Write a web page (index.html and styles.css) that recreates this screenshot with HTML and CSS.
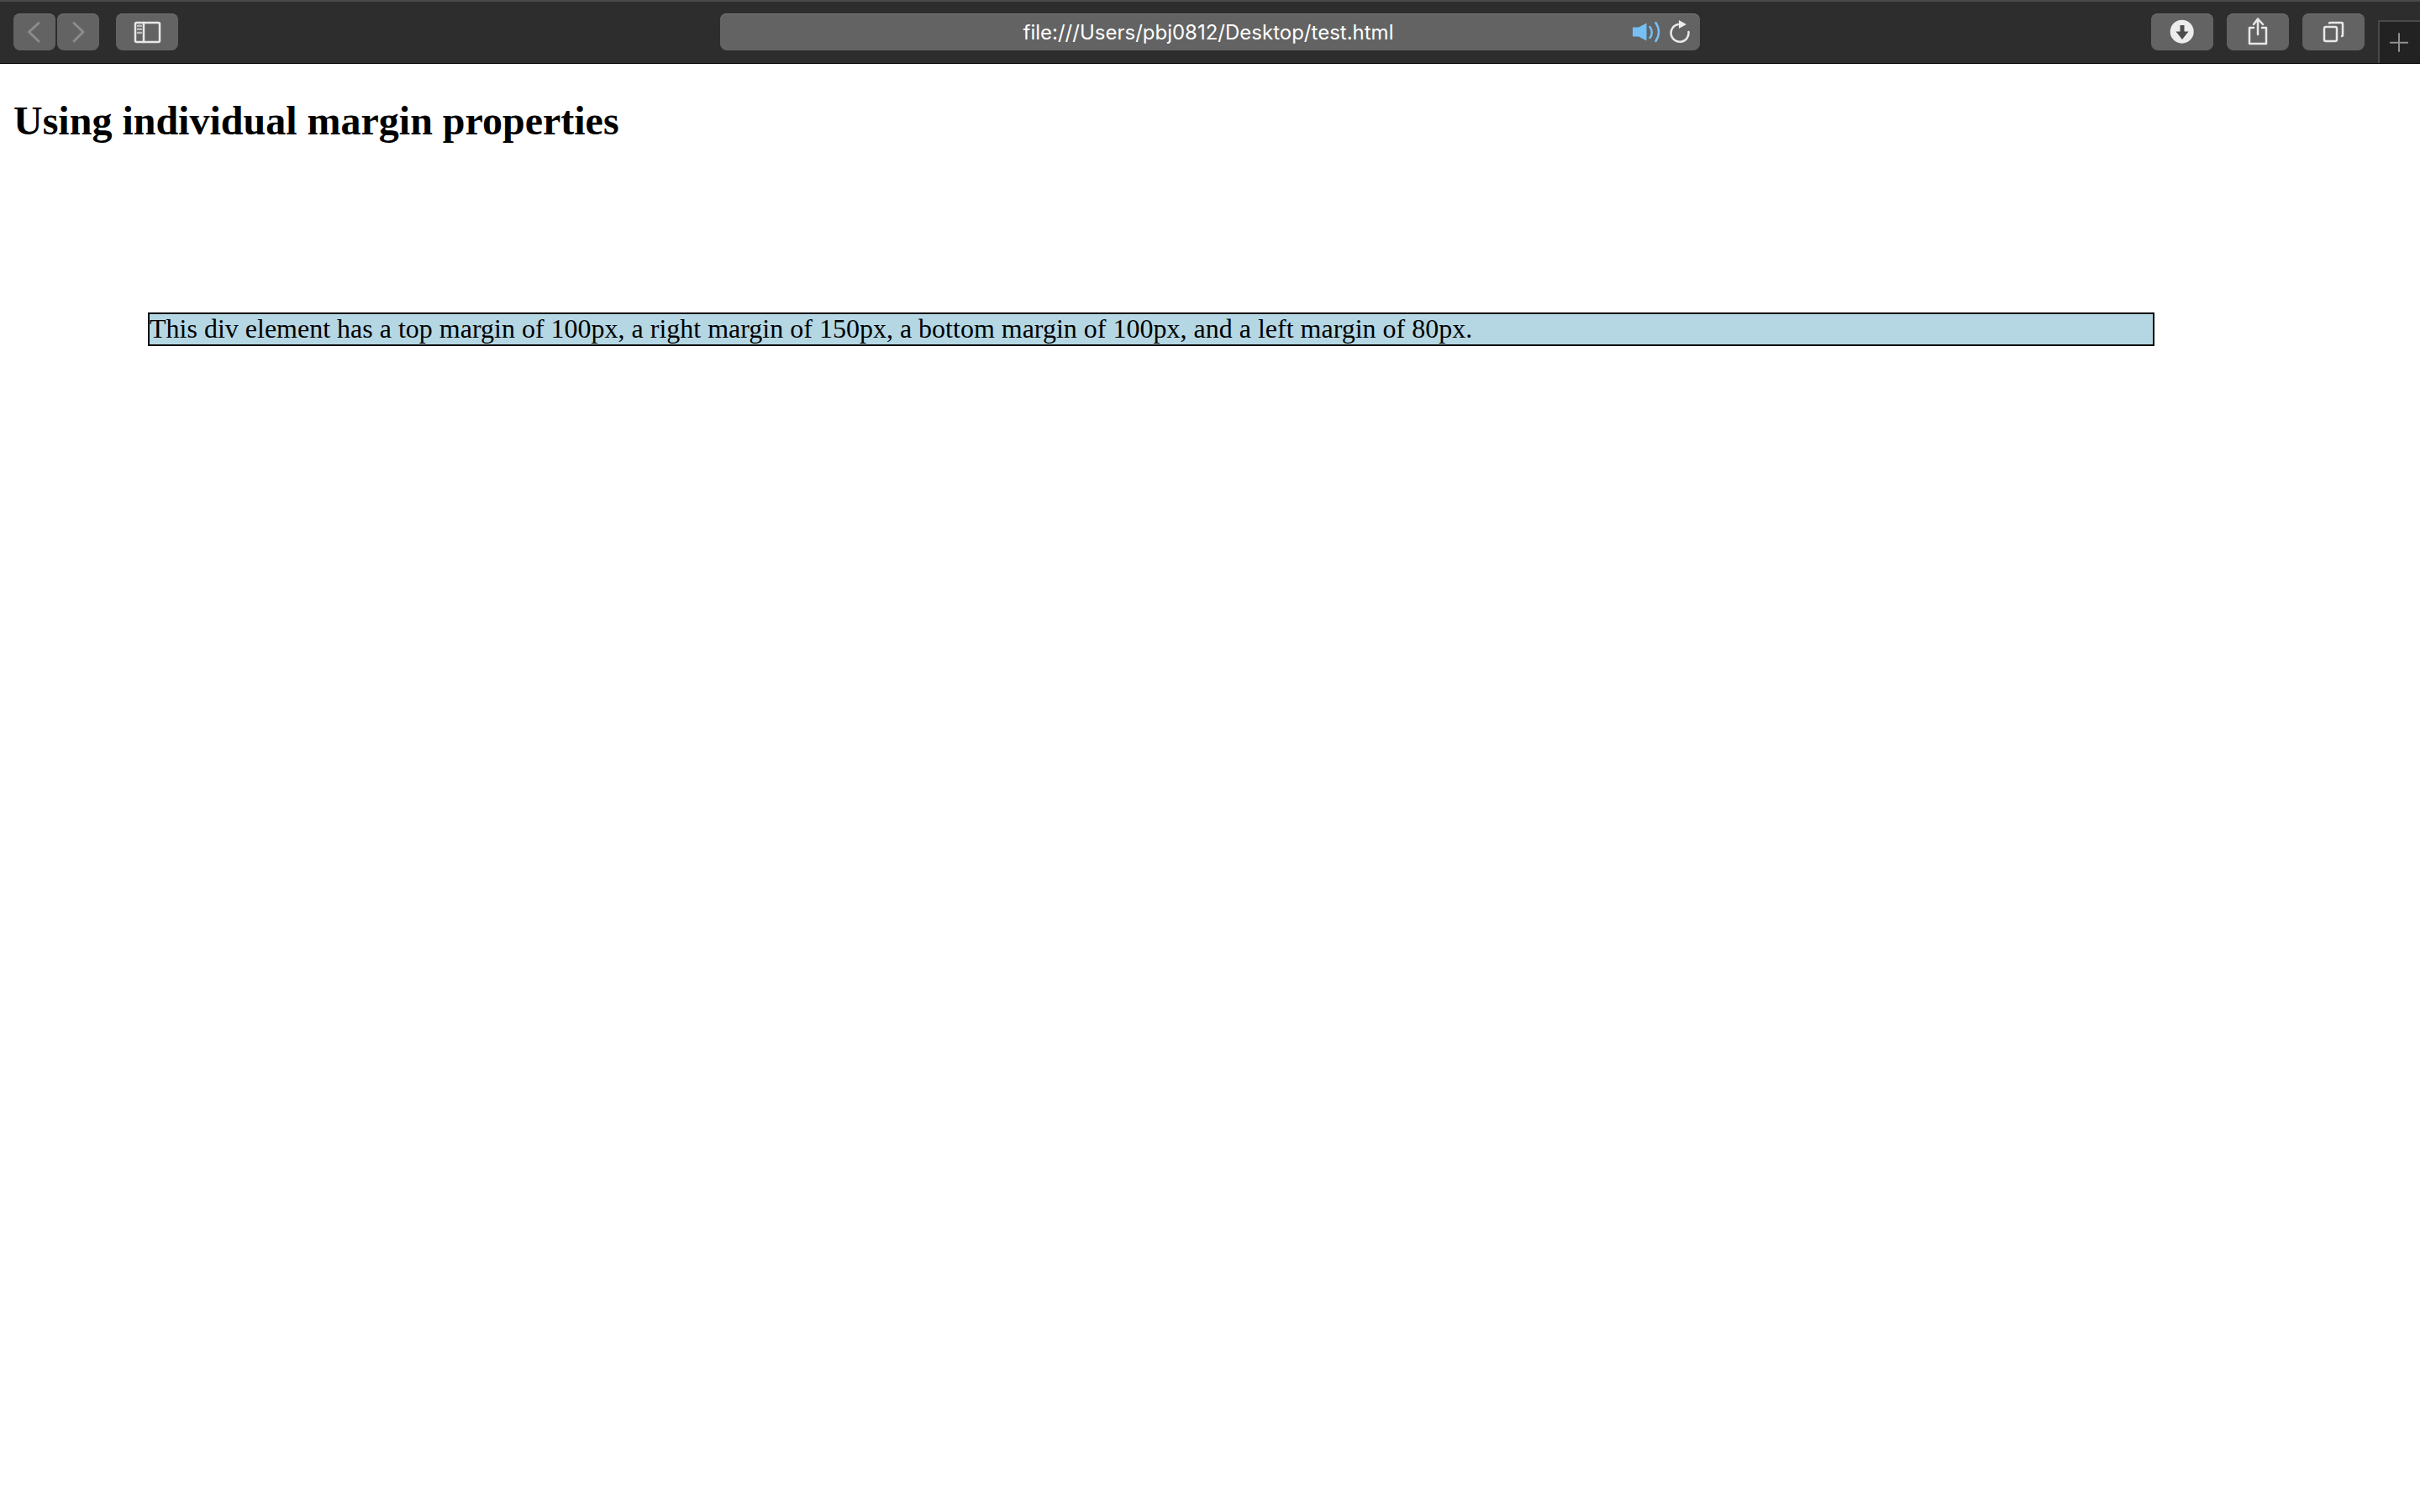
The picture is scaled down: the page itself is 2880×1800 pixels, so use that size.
FILE: index.html
```html
<!DOCTYPE html>
<html lang="en">
<head>
<meta charset="utf-8">
<title>test.html</title>
<link rel="stylesheet" href="styles.css">
</head>
<body>
<header class="toolbar">
  <div class="group nav">
    <button class="btn btn-nav"><svg width="50" height="44" viewBox="0 0 50 44"><path d="M30 11.500L18.500 22L30 33" class="chev"/></svg></button>
    <button class="btn btn-nav"><svg width="50" height="44" viewBox="0 0 50 44"><path d="M20 11.500L31 22L20 33" class="chev"/></svg></button>
  </div>
  <button class="btn btn-wide sidebar-btn"><svg width="74" height="44" viewBox="0 0 74 44"><rect x="23" y="11" width="29" height="23" rx="1.500" class="line"/><path d="M33 11V34" class="line"/><path d="M26 14.700h4M26 18.700h4M26 23h4" class="line dim"/></svg></button>
  <div class="address">
    <span class="url">file:///Users/pbj0812/Desktop/test.html</span>
    <span class="addr-icons">
      <svg width="36" height="44" viewBox="0 0 36 44"><path d="M0 16.500h7l9.500-5v21l-9.500-5H0z" class="blue-fill"/><path d="M20.500 16c3 4 3 9.500 0 13" class="blue"/><path d="M27.500 11c4.500 7 4.500 15 0 22" class="blue"/></svg>
      <svg width="24" height="44" viewBox="0 0 24 44"><path d="M10 13a10.500 10.500 0 1 0 12.500 9" class="line"/><path d="M11 8L20 13L11 18z" class="light-fill"/></svg>
    </span>
  </div>
  <div class="group actions">
    <button class="btn btn-wide"><svg width="74" height="44" viewBox="0 0 74 44"><circle cx="36.700" cy="21.700" r="14" class="light-fill"/><path d="M34.500 14h5v7.500h5L37 31l-7.500-9.500h5z" class="dark-fill"/></svg></button>
    <button class="btn btn-wide"><svg width="74" height="44" viewBox="0 0 74 44"><path d="M32 17h-5v19h20V17h-5" class="line"/><path d="M37 25V6.500M32 13L37 6.500L43 13" class="line"/></svg></button>
    <button class="btn btn-wide"><svg width="74" height="44" viewBox="0 0 74 44"><rect x="26" y="16" width="15" height="17" rx="2" class="line"/><path d="M32 11.500c0-.5.500-.5 1-.5h14c.5 0 1 .5 1 1V26c0 .5-.5 1-1 1" class="line"/></svg></button>
  </div>
  <div class="new-tab"><svg width="48" height="49" viewBox="0 0 48 49"><path d="M12 24.700h22M23 13.300v22.400" class="plus"/></svg></div>
</header>
<main class="page">
  <h2 class="title">Using individual margin properties</h2>
  <div class="demo">This div element has a top margin of 100px, a right margin of 150px, a bottom margin of 100px, and a left margin of 80px.</div>
</main>
</body>
</html>
```
FILE: styles.css
```css
html, body {
  margin: 0;
  padding: 0;
  background: #fff;
}
body {
  width: 2880px;
  height: 1800px;
  overflow: hidden;
}
.toolbar {
  box-sizing: border-box;
  height: 76px;
  display: flex;
  align-items: flex-start;
  padding: 14px 0 0 16px;
  background: #2d2d2d;
  border-top: 2px solid #4a4a4a;
  border-bottom: 1px solid #000;
}
.group {
  display: flex;
}
.nav {
  gap: 2px;
}
.actions {
  gap: 16px;
  margin-left: 537px;
}
.btn {
  display: block;
  height: 44px;
  padding: 0;
  border: 0;
  border-radius: 8px;
  background: #636363;
  box-shadow: inset 0 1px 0 #707070;
}
.btn svg, .address svg, .new-tab svg {
  display: block;
}
.btn-nav {
  width: 50px;
}
.btn-wide {
  width: 74px;
}
.sidebar-btn {
  margin-left: 20px;
  margin-right: 645px;
}
.address {
  position: relative;
  width: 1166px;
  height: 44px;
  border-radius: 8px;
  background: #636363;
  box-shadow: inset 0 1px 0 #7a7a7a;
  display: flex;
  justify-content: center;
  align-items: center;
}
.url {
  font-family: Inter, "Liberation Sans", sans-serif;
  font-size: 24px;
  color: #fff;
  white-space: nowrap;
  line-height: 44px;
  margin-right: 4px;
  margin-top: 1px;
}
.addr-icons {
  position: absolute;
  right: 12px;
  top: 0;
  display: flex;
  gap: 8px;
}
.new-tab {
  box-sizing: border-box;
  width: 50px;
  height: 51px;
  margin-left: 16px;
  margin-top: 8px;
  background: #222;
  border-left: 2px solid #4a4a4a;
  border-top: 2px solid #4a4a4a;
  overflow: hidden;
}
.chev {
  fill: none;
  stroke: #8c8c8c;
  stroke-width: 3;
  stroke-linecap: round;
  stroke-linejoin: round;
}
.line {
  fill: none;
  stroke: #e8e8e8;
  stroke-width: 2.500;
  stroke-linecap: round;
  stroke-linejoin: round;
}
.dim {
  stroke: #bdbdbd;
}
.blue {
  fill: none;
  stroke: #75bff5;
  stroke-width: 2.500;
  stroke-linecap: round;
}
.blue-fill {
  fill: #75bff5;
}
.light-fill {
  fill: #ececec;
}
.dark-fill {
  fill: #4c4c4c;
}
.plus {
  fill: none;
  stroke: #8f8f8f;
  stroke-width: 2;
}
.page {
  padding: 40px 16px 0;
}
.title {
  margin: 0;
  font-family: "Liberation Serif", serif;
  font-size: 48px;
  font-weight: 700;
  color: #000;
}
.demo {
  margin: 201px 300px 200px 160px;
  padding-bottom: 1px;
  border: 2px solid #000;
  background: #b5d7e4;
  font-family: "Liberation Serif", serif;
  font-size: 32px;
  line-height: 35px;
  color: #000;
}
```
